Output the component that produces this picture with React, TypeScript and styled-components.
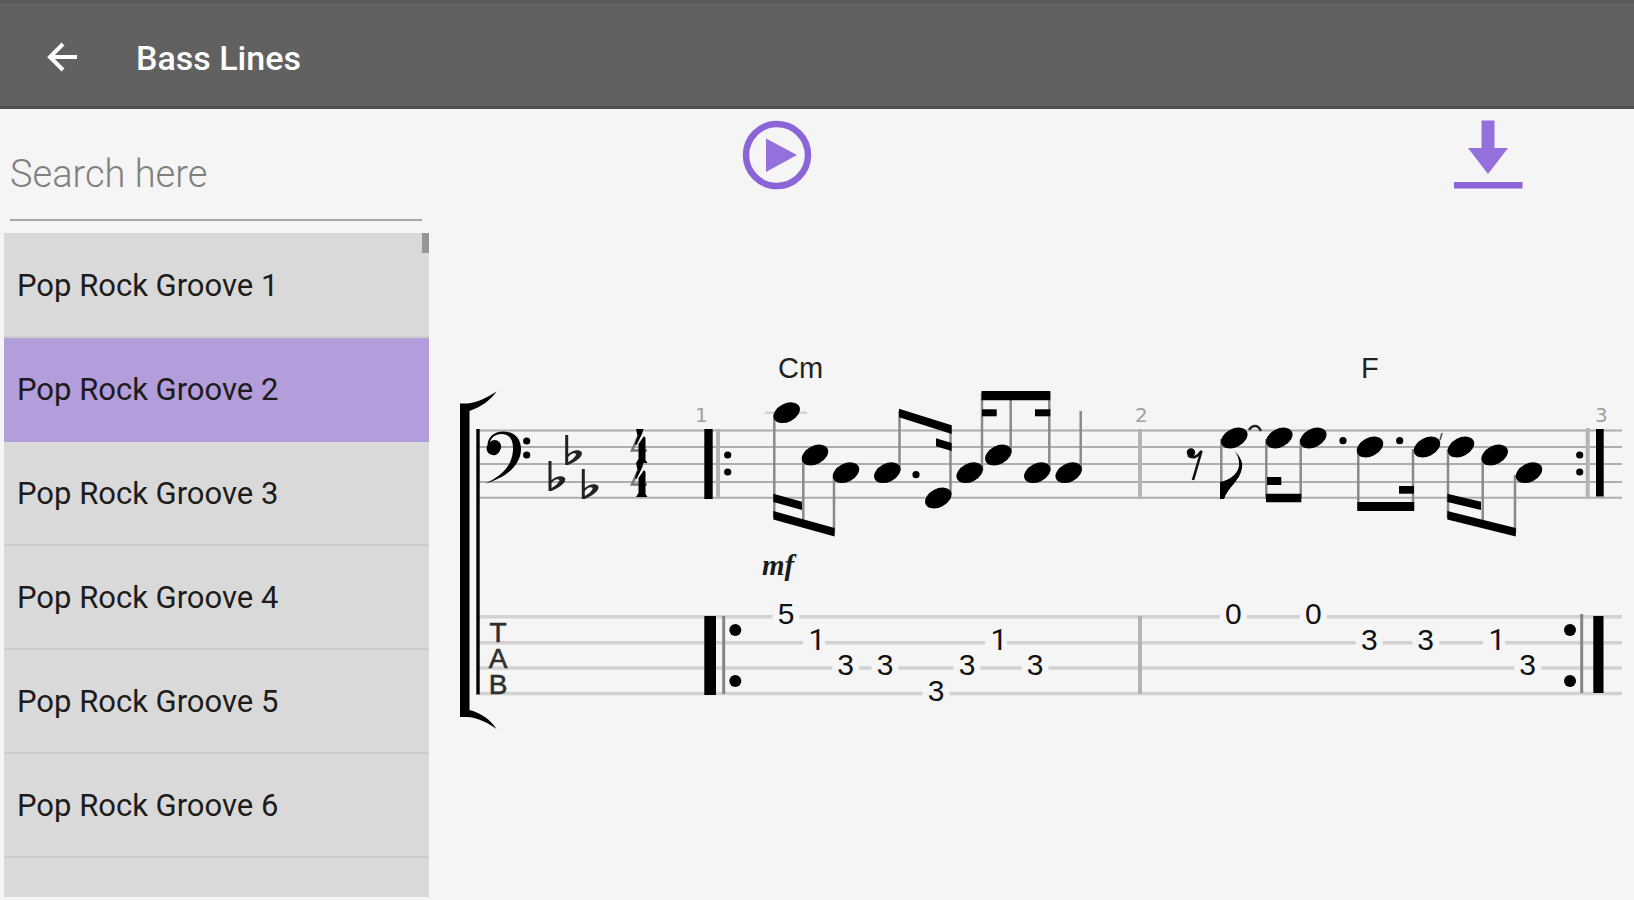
import React, { useState } from "react";
import styled, { createGlobalStyle } from "styled-components";

const GlobalStyle = createGlobalStyle`
  * { box-sizing: border-box; }
  body { margin: 0; background: #f5f5f5; font-family: Roboto, sans-serif; }
  button, input { font: inherit; }
`;

const Screen = styled.div`
  display: flex;
  flex-direction: column;
  height: 100vh;
  overflow: hidden;
`;

const AppBar = styled.header`
  display: flex;
  align-items: center;
  flex: none;
  height: 109px;
  padding: 4px 46px 0;
  gap: 58px;
  color: #fff;
  background: #616161;
  border-top: 3px solid #5a5a5a;
  border-bottom: 3px solid #505050;
`;

const IconButton = styled.button`
  display: flex;
  padding: 0;
  border: 0;
  background: none;
  color: inherit;
  cursor: pointer;
`;

const Title = styled.h1`
  margin: 0;
  padding-top: 2px;
  font-size: 34px;
  line-height: 40px;
  font-weight: 500;
`;

const Body = styled.div`
  display: flex;
  flex: 1;
  min-height: 0;
`;

const Sidebar = styled.aside`
  display: flex;
  flex-direction: column;
  flex: none;
  width: 430px;
  padding: 32px 1px 3px 4px;
`;

const SearchInput = styled.input`
  height: 80px;
  margin: 0 7px 12px 6px;
  padding: 0 0 12px;
  border: 0;
  border-bottom: 2px solid #a8a8a8;
  outline: 0;
  background: none;
  font-size: 38px;
  font-weight: 300;
  color: #222;
  &::placeholder { color: #808080; opacity: 1; }
`;

const ListFrame = styled.div`
  position: relative;
  flex: 1;
  min-height: 0;
`;

const List = styled.ul`
  height: 100%;
  margin: 0;
  padding: 1px 0 0;
  overflow-y: auto;
  scrollbar-width: none;
  list-style: none;
  background: #d9d9d9;
`;

const ScrollThumb = styled.span`
  position: absolute;
  top: 0;
  right: 0;
  width: 7px;
  height: 20px;
  background: #969696;
`;

const Row = styled.button<{ $selected: boolean }>`
  display: block;
  width: 100%;
  height: 104px;
  padding: 2px 13px 0;
  border: 0;
  border-bottom: 2px solid ${(p) => (p.$selected ? "#b09cd6" : "#cdcdcd")};
  background: ${(p) => (p.$selected ? "#b39ddb" : "transparent")};
  color: #1c1c1c;
  font-size: 31px;
  line-height: 36px;
  text-align: left;
  cursor: pointer;
`;

const Main = styled.main`
  flex: 1;
  min-width: 0;
  color: #9370db;
`;

const Actions = styled.div`
  display: flex;
  justify-content: space-between;
  padding: 11px 111px 0 312px;
`;

const Score = styled.svg`
  display: block;
  width: 100%;
  margin-top: 151px;
  color: #000;
`;

const ScoreText = styled.text`
  font-family: "Liberation Sans", Arial, sans-serif;
  font-size: 29px;
  fill: #222;
`;

const ClefText = styled(ScoreText)`
  font-size: 28px;
  fill: #2e2e2e;
  stroke: #2e2e2e;
  stroke-width: 0.6;
`;

/* the figure 1 is set in Roboto, which draws it without a foot */
const Fret = styled.text<{ $plain: boolean }>`
  font-family: ${(p) => (p.$plain ? "Roboto" : '"Liberation Sans", Arial')}, sans-serif;
  font-size: 30px;
  fill: #111;
`;

const BarNumber = styled.text`
  font-family: "DejaVu Sans", sans-serif;
  font-size: 20px;
  fill: #a0a0a0;
`;

const Dynamic = styled.text`
  font-family: "Liberation Serif", serif;
  font-size: 29px;
  font-weight: 700;
  font-style: italic;
  fill: #1a1a1a;
`;

const grooves = [1, 2, 3, 4, 5, 6, 7].map((n) => `Pop Rock Groove ${n}`);

const staffLines = [89.5, 106, 123, 141, 156.7];
const stringLines = [275.7, 301.7, 327, 352.5];

const noteHeads = [
  [356.7, 71.7], [385, 114], [416, 131.7], [457.3, 131.7], [508.3, 157],
  [539.7, 131.7], [568.3, 114], [607.3, 131.7], [638.7, 131.7],
  [804.3, 97], [849.3, 97], [883.3, 97], [940, 106], [997, 106],
  [1031, 106], [1064.7, 114], [1099, 131.7],
];

// x, top, bottom
const stems = [
  [344.3, 74, 176], [373.3, 116, 180], [404, 134, 192], [469.5, 70, 130],
  [520.5, 86, 154], [552, 52, 130], [580.7, 56, 112], [619.3, 52, 130],
  [650.7, 70, 130], [791.3, 98, 158], [836.3, 98, 158], [870.7, 98, 158],
  [928.3, 108, 168], [983, 108, 168], [1018, 108, 177], [1052.7, 116, 180],
  [1085, 134, 192],
];

// x1, top1, x2, top2, thickness
const beams = [
  [343.3, 170, 404.6, 187, 8.6], [343.3, 152.7, 372, 160.7, 8.3],
  [469, 67.7, 521.7, 84.3, 8.6], [506, 97.3, 521.7, 102, 8],
  [551.5, 50, 620.3, 50, 9.3], [552, 68.3, 566.7, 68.3, 7], [605, 68.3, 620.3, 68.3, 7],
  [836, 152.7, 871.3, 152.7, 8.6], [837, 136, 851.3, 136, 8],
  [927.3, 161, 984.2, 161, 9], [969, 145, 984, 145, 7.7],
  [1017.3, 170, 1085.8, 187, 8.6], [1017.3, 152.7, 1051, 160.7, 8.3],
];

const dots = [
  [96.7, 100], [96.7, 114], [297.7, 114], [297.7, 131], [486, 133.7],
  [913, 99.7], [969.7, 99.7], [1149.7, 114], [1149.7, 131],
];

// x, string, fret
const frets: [number, number, string][] = [
  [356, 0, "5"], [387, 1, "1"], [415.7, 2, "3"], [455, 2, "3"], [506, 3, "3"],
  [537, 2, "3"], [569, 1, "1"], [605, 2, "3"], [803.3, 0, "0"], [883.3, 0, "0"],
  [939.3, 1, "3"], [995.7, 1, "3"], [1067, 1, "1"], [1097.7, 2, "3"],
];

const flats = [[136.7, 123], [120, 149], [153.3, 157]];

function BackIcon() {
  return (
    <svg width="32" height="32" viewBox="0 0 32 32" fill="none" stroke="currentColor" strokeWidth="4">
      <path d="M31 16H4M17 3L4 16l13 13" />
    </svg>
  );
}

function PlayIcon() {
  return (
    <svg width="70" height="70" viewBox="0 0 70 70">
      <circle cx="35" cy="35" r="31" fill="none" stroke="#8b65d8" strokeWidth="6.5" />
      <path d="M24 18.5V52L55 35z" fill="currentColor" />
    </svg>
  );
}

function DownloadIcon() {
  return (
    <svg width="70" height="70" viewBox="0 0 70 70" fill="currentColor">
      <path d="M28.500 0.500H41.500V28H55L35 54L15 28H28.500z" />
      <path d="M1 62H69.500V68.500H1z" fill="#8b65d8" />
    </svg>
  );
}

function TimeFour({ y }: { y: number }) {
  return (
    <g transform={`translate(200 ${y})`}>
      <path d="M8 8L2 21.500H17" fill="none" stroke="#777" strokeWidth="2.600" />
      <path d="M6 0H13.500L12 5L6.500 16L5 15L7.500 7zM8.500 15L14 7L15.500 9V31L17.500 34H6L8.500 30z" />
    </g>
  );
}

function ScoreSheet() {
  return (
    <Score viewBox="0 0 1204 400" role="img" aria-label="Pop Rock Groove 2 notation">
      <g stroke="#aeaeae" strokeWidth="2">
        {staffLines.map((y) => <path key={y} d={`M49 ${y}H1192`} />)}
        <path d="M335 71.700H377" stroke="#ccc" />
      </g>
      <g stroke="#d2d2d2" strokeWidth="3.600">
        {stringLines.map((y) => <path key={y} d={`M49 ${y}H1192`} />)}
      </g>

      {/* system bracket */}
      <path d="M30 62.500H38C49 61 58 56 66.500 50.500C61 59 51 66 39.500 70V369C51 372 61 379 66.500 388C58 382 49 377 38 376H30z" />
      <path d="M46.300 88H49.700V353.500H46.300z" />

      {/* bass clef */}
      <path d="M55 142.500C72 135 82 125 83 109C83.500 98 79 93 71.500 93C65 93 61 97 60 101.500A6.800 6.800 0 1 1 57.500 104C58 96 64 90.500 73 90.500C84 90.500 91 97 91 108C91 124 76 137 55 142.500z" />
      <circle cx="64.700" cy="105.500" r="6.500" />

      {flats.map(([x, y]) => (
        <g key={x} transform={`translate(${x} ${y})`}>
          <path d="M-1.500 -29H1.500V-10C6 -14 12 -15 15 -12C17 -7 8 -2 1.500 1H-1.500zM1.500 -7V-2C5 -4 9 -7 9.500 -10C7 -12 4 -10 1.500 -7z" fillRule="evenodd" fill="#222" />
        </g>
      ))}
      <TimeFour y={88} />
      <TimeFour y={122} />

      {/* bar lines */}
      <path d="M274.300 88H282.700V158H274.300zM1166 88H1173.700V155.500H1166z" />
      <path d="M274.300 275H286V354H274.300zM1163.300 275H1173.500V352H1163.300z" />
      <g stroke="#b4b4b4" strokeWidth="4">
        <path d="M288 88V158M710 88V158M710 275V353M1157.700 87V157" />
      </g>
      <path d="M293.700 275V353M1151.700 273V352" stroke="#858585" strokeWidth="3" />
      {[[305.3, 289], [305.3, 340], [1140, 289], [1140, 340]].map(([x, y]) => (
        <circle key={`${x}-${y}`} cx={x} cy={y} r="6" />
      ))}

      {/* notes */}
      <g stroke="#8a8a8a" strokeWidth="2.500">
        {stems.map(([x, a, b]) => <path key={x} d={`M${x} ${a}V${b}`} />)}
      </g>
      {noteHeads.map(([x, y]) => (
        <ellipse key={x} rx="14.100" ry="9.200" transform={`translate(${x} ${y}) rotate(-27)`} />
      ))}
      {beams.map(([x1, y1, x2, y2, t]) => (
        <path key={`${x1}-${y1}`} d={`M${x1} ${y1}L${x2} ${y2}V${y2 + t}L${x1} ${y1 + t}z`} />
      ))}
      {dots.map(([x, y]) => <circle key={`${x}-${y}`} cx={x} cy={y} r="3.600" />)}

      {/* eighth rest */}
      <circle cx="761" cy="111.500" r="4.200" />
      <path d="M758 114C763 119 768 115 771.500 110L763 139" fill="none" stroke="#111" strokeWidth="2.600" />
      {/* eighth flag */}
      <path d="M790 158V141C801 139 810 131 809 122C809 117 807 113 804.500 110C810 115 813 121 812 127C810 140 798 146 794 158z" />
      {/* ties */}
      <path d="M819 89C822 84 828 83 831 90" fill="none" stroke="#222" strokeWidth="2.400" />
      <path d="M1012 92L1010 99" stroke="#555" strokeWidth="1.600" />

      <BarNumber x="265" y="81">1</BarNumber>
      <BarNumber x="705" y="81">2</BarNumber>
      <BarNumber x="1165" y="81">3</BarNumber>
      <ScoreText x="348" y="37">Cm</ScoreText>
      <ScoreText x="931" y="37">F</ScoreText>
      <Dynamic x="332" y="234">mf</Dynamic>
      <g textAnchor="middle">
        <ClefText x="68" y="301">T</ClefText>
        <ClefText x="68" y="327">A</ClefText>
        <ClefText x="68" y="353">B</ClefText>
        {frets.map(([x, s, n]) => (
          <g key={x}>
            <rect x={x - (n === "1" ? 14 : 13.5)} y={stringLines[s] - 4} width={n === "1" ? 22 : 27} height="8" fill="#f5f5f5" />
            <Fret $plain={n === "1"} x={x} y={[283, 309, 334, 360][s]}>{n}</Fret>
          </g>
        ))}
      </g>
    </Score>
  );
}

export default function App() {
  const [selected, setSelected] = useState(1);
  return (
    <Screen>
      <GlobalStyle />
      <AppBar>
        <IconButton aria-label="Back"><BackIcon /></IconButton>
        <Title>Bass Lines</Title>
      </AppBar>
      <Body>
        <Sidebar>
          <SearchInput type="text" placeholder="Search here" aria-label="Search here" />
          <ListFrame>
            <List>
              {grooves.map((name, i) => (
                <li key={name}>
                  <Row $selected={i === selected} onClick={() => setSelected(i)}>{name}</Row>
                </li>
              ))}
            </List>
            <ScrollThumb />
          </ListFrame>
        </Sidebar>
        <Main>
          <Actions>
            <IconButton aria-label="Play"><PlayIcon /></IconButton>
            <IconButton aria-label="Download"><DownloadIcon /></IconButton>
          </Actions>
          <ScoreSheet />
        </Main>
      </Body>
    </Screen>
  );
}
